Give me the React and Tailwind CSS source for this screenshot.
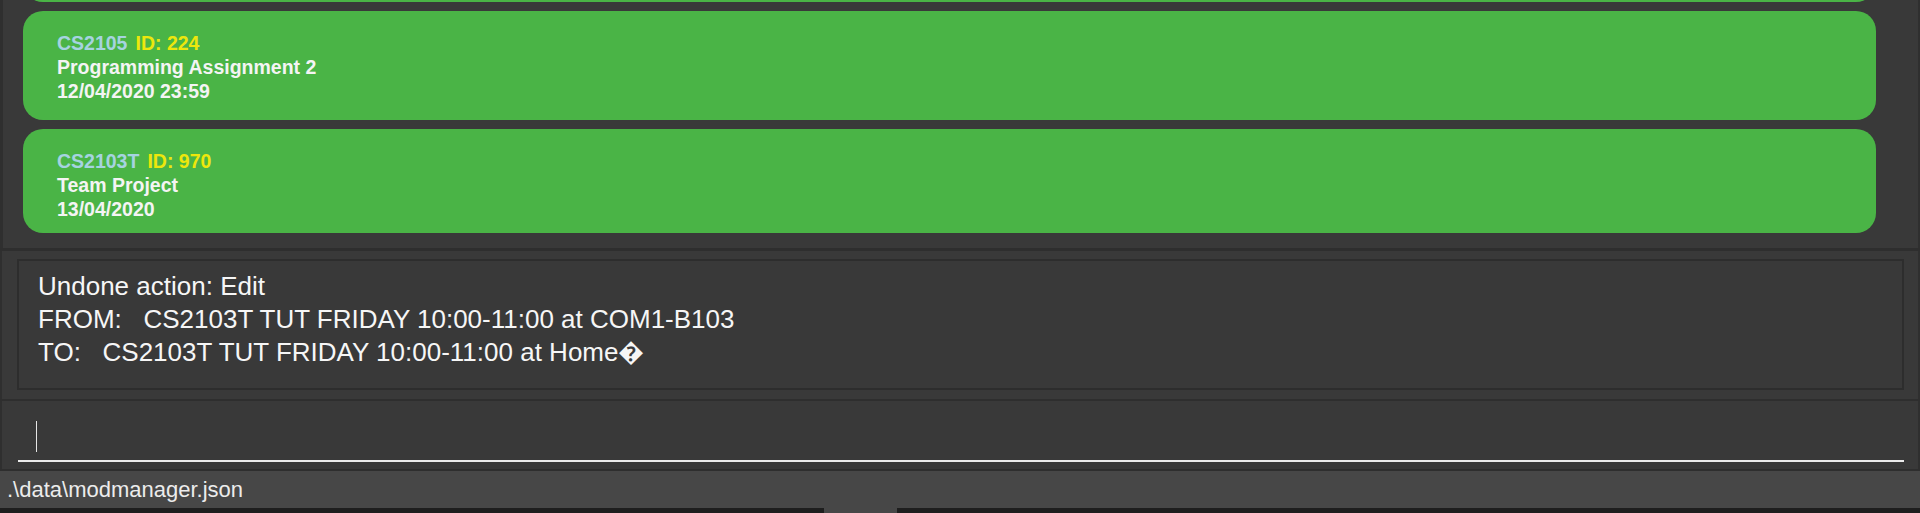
import React from 'react';

const CARDS = [
  { code: 'CS2105', id: '224', title: 'Programming Assignment 2', date: '12/04/2020 23:59', height: 'h-[109px]' },
  { code: 'CS2103T', id: '970', title: 'Team Project', date: '13/04/2020', height: 'h-[104px]' },
];

function TaskCard({ code, id, title, date, height }) {
  return (
    <div className={`${height} shrink-0 rounded-[20px] bg-[#4ab446] pl-[34px] pt-[20px] text-[19.5px] font-bold leading-[24px]`}>
      <div className="flex gap-[8px]">
        <span className="text-[#a6d3e0]">{code}</span>
        <span className="text-[#ede70c]">ID: {id}</span>
      </div>
      <div className="text-[#f4f4f4]">{title}</div>
      <div className="text-[#f4f4f4]">{date}</div>
    </div>
  );
}

export default function App() {
  return (
    <div className="flex h-[513px] w-full flex-col overflow-hidden bg-[#393939] font-['Liberation_Sans',Arial,sans-serif]">
      {/* task list (scrolled, previous card only shows its bottom edge) */}
      <div className="h-[248px] shrink-0 overflow-hidden border-l-[3px] border-r-2 border-[#2f2f2f] pl-[20px] pr-[42px]">
        <div className="-mt-[107px] flex flex-col gap-[9px]">
          <div className="h-[109px] shrink-0 rounded-[20px] bg-[#4ab446]" />
          {CARDS.map((c) => (
            <TaskCard key={c.id} {...c} />
          ))}
        </div>
      </div>

      <div className="h-[3px] shrink-0 bg-[#2e2e2e]" />

      {/* result display */}
      <div className="flex h-[148px] shrink-0 border-x-2 border-[#2f2f2f] pb-[9px] pl-[15px] pr-[14px] pt-[8px]">
        <div className="flex-1 border-2 border-[#2d2d2d] pl-[19px] pt-[9px] text-[26px] leading-[33px] text-[#f6f6f6]">
          <div>Undone action: Edit</div>
          <div className="whitespace-pre">FROM:   CS2103T TUT FRIDAY 10:00-11:00 at COM1-B103</div>
          <div className="whitespace-pre">TO:   CS2103T TUT FRIDAY 10:00-11:00 at Home{'\uFFFD'}</div>
        </div>
      </div>

      <div className="h-[2px] shrink-0 bg-[#2e2e2e]" />

      {/* command box */}
      <div className="flex h-[68px] shrink-0 flex-col border-x-2 border-[#2f2f2f] pl-[16px] pr-[14px] pt-[20px]">
        <div className="h-[31px] pl-[18px]">
          <div className="h-full w-px bg-[#e6e6e6]" />
        </div>
        <div className="mt-[8px] h-[2px] bg-[#ececec]" />
      </div>

      <div className="h-[2px] shrink-0 bg-[#2e2e2e]" />

      {/* status bar */}
      <div className="h-[37px] shrink-0 bg-[#474747] pl-[7px] text-[22px] leading-[37px] text-[#ececec]">
        .\data\modmanager.json
      </div>

      <div className="flex h-[5px] shrink-0 bg-[#1e1e1e] pl-[824px]">
        <div className="h-full w-[73px] bg-[#474747]" />
      </div>
    </div>
  );
}
